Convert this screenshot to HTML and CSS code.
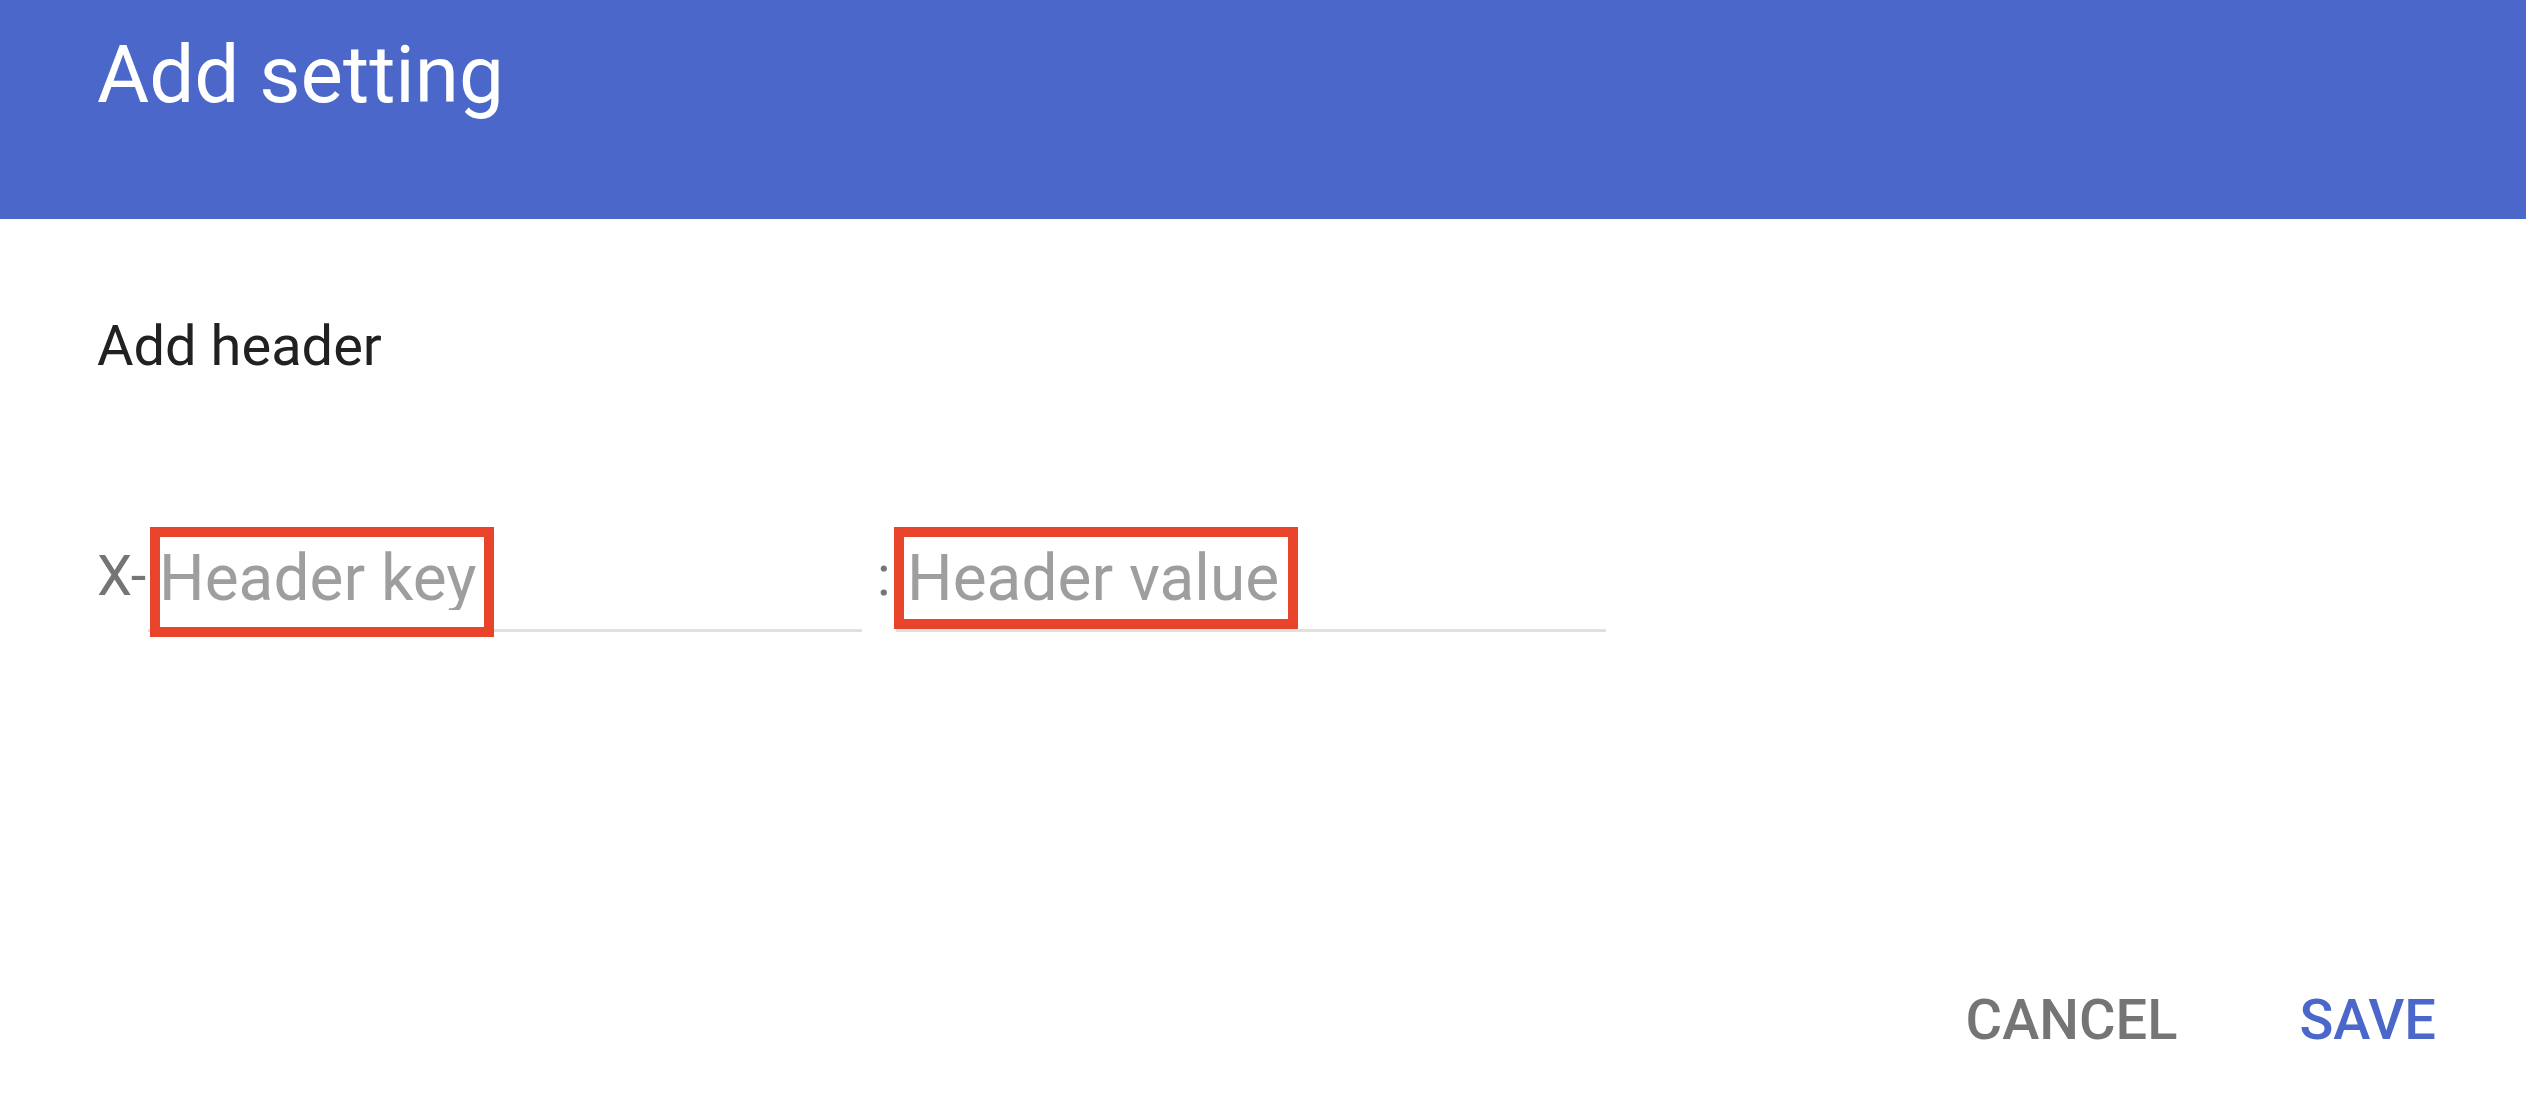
FILE: index.html
```html
<!DOCTYPE html>
<html lang="en">
<head>
<meta charset="utf-8">
<title>Add setting</title>
<link rel="stylesheet" href="styles.css">
</head>
<body>
<div class="dialog">
  <header class="dialog-header">
    <h1 class="dialog-title">Add setting</h1>
  </header>
  <main class="dialog-body">
    <p class="section-label">Add header</p>
    <div class="header-row">
      <span class="prefix">X-</span>
      <label class="field field-key">
        <input class="field-input" type="text" placeholder="Header key">
        <span class="highlight highlight-key"></span>
      </label>
      <span class="separator">:</span>
      <label class="field field-value">
        <input class="field-input" type="text" placeholder="Header value">
        <span class="highlight highlight-value"></span>
      </label>
    </div>
  </main>
  <footer class="dialog-actions">
    <button class="btn btn-cancel" type="button">Cancel</button>
    <button class="btn btn-save" type="button">Save</button>
  </footer>
</div>
</body>
</html>
```

FILE: styles.css
```css
* {
  box-sizing: border-box;
}

html, body {
  margin: 0;
  padding: 0;
  background: #ffffff;
}

body {
  font-family: Roboto, "Liberation Sans", Arial, sans-serif;
  width: 2526px;
  height: 1100px;
  overflow: hidden;
}

.dialog {
  display: flex;
  flex-direction: column;
  height: 1100px;
}

.dialog-header {
  background: #4a67c9;
  height: 219px;
  padding: 35px 0 0 97px;
}

.dialog-title {
  margin: 0;
  font-size: 80px;
  line-height: 80px;
  font-weight: 400;
  color: #ffffff;
}

.dialog-body {
  padding: 0 0 0 97px;
}

.section-label {
  margin: 99px 0 0;
  font-size: 56px;
  line-height: 56px;
  color: #212121;
}

.header-row {
  display: flex;
  align-items: flex-start;
  margin-top: 172px;
}

.prefix,
.separator {
  font-size: 56px;
  line-height: 56px;
  color: #757575;
  margin-top: 2px;
}

.prefix {
  width: 51px;
}

.separator {
  width: 34px;
  padding-left: 15px;
}

.field {
  position: relative;
  display: block;
  width: 714px;
  border-bottom: 3px solid #e0e0e0;
  padding-bottom: 19px;
}

.field-value {
  width: 710px;
}

.field-input {
  display: block;
  width: 100%;
  height: 64px;
  border: 0;
  outline: none;
  padding: 0 0 0 11px;
  margin: 0;
  background: transparent;
  font-family: Roboto, "Liberation Sans", Arial, sans-serif;
  font-size: 64px;
  line-height: 64px;
  color: #212121;
}

.field-input::placeholder {
  color: #9e9e9e;
}

.highlight {
  position: absolute;
  top: -19px;
  border: 10px solid #e8432b;
  pointer-events: none;
}

.highlight-key {
  left: 2px;
  width: 344px;
  height: 110px;
}

.highlight-value {
  left: -2px;
  width: 404px;
  height: 102px;
}

.dialog-actions {
  display: flex;
  justify-content: flex-end;
  gap: 122px;
  margin-top: auto;
  padding: 0 90px 52px 0;
}

.btn {
  border: 0;
  background: transparent;
  padding: 0;
  margin: 0;
  font-family: Roboto, "Liberation Sans", Arial, sans-serif;
  font-size: 56px;
  line-height: 56px;
  font-weight: 500;
  text-transform: uppercase;
  letter-spacing: 0;
  cursor: pointer;
}

.btn-cancel {
  color: #757575;
}

.btn-save {
  color: #4a67c9;
}
```
